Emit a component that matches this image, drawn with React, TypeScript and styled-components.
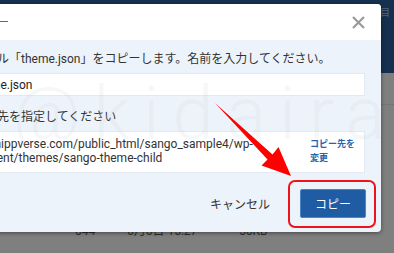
import React from 'react';
import styled, { createGlobalStyle } from 'styled-components';

const Global = createGlobalStyle`
  html, body { margin: 0; padding: 0; }
  body {
    width: 394px;
    height: 253px;
    overflow: hidden;
    background: #7f7f7f;
    font-family: Roboto, "Noto Sans CJK JP", sans-serif;
  }
`;

const Page = styled.div`
  position: relative;
  width: 394px;
  height: 253px;
  overflow: hidden;
  background: #7f7f7f;
`;

const TopBar = styled.div`
  height: 73px;
  background: #16304f;
  display: flex;
  justify-content: flex-end;
  padding: 8px 4px 0 0;
  box-sizing: border-box;
`;

const TopIcon = styled.span`
  font-size: 10px;
  color: #55657c;
  line-height: 10px;
`;

const Divider = styled.div`
  height: 31px;
  border-bottom: 1px solid rgba(0, 0, 0, 0.08);
`;

const ListRow = styled.div`
  display: flex;
  padding: 119px 0 0 75px;
  gap: 32px;
  font-size: 12px;
  line-height: 14px;
  color: #2e2e2e;
`;

const Cell = styled.span<{ $w: number }>`
  width: ${(p) => p.$w}px;
  white-space: nowrap;
`;

const Modal = styled.div`
  position: absolute;
  top: 4px;
  left: -60px;
  width: 441px;
  border-radius: 4px;
  overflow: hidden;
  box-shadow: 0 1px 4px rgba(0, 0, 0, 0.45);
  background: #edf3fa;
`;

const Header = styled.div`
  height: 36px;
  background: #ffffff;
  display: flex;
  align-items: center;
  justify-content: space-between;
  padding: 0 16px 0 21px;
`;

const TitleTab = styled.div`
  width: 47px;
  height: 1px;
  margin-top: -2px;
  background: #3a72b8;
`;

const CloseButton = styled.button`
  border: none;
  background: none;
  padding: 0;
  width: 14px;
  height: 14px;
  display: flex;
  align-items: center;
  justify-content: center;
  cursor: pointer;
`;

const Body = styled.div`
  padding: 11px 16px 0 21px;
`;

const Message = styled.div`
  font-size: 12px;
  line-height: 16px;
  color: #333333;
  white-space: nowrap;
`;

const NameInput = styled.div`
  margin-top: 6px;
  height: 23px;
  box-sizing: border-box;
  background: #ffffff;
  border: 1px solid #e3e9f0;
  padding-left: 11px;
  display: flex;
  align-items: center;
  font-size: 12px;
  color: #222222;
`;

const Label = styled.div`
  margin-top: 13px;
  font-size: 12px;
  line-height: 16px;
  color: #333333;
  white-space: nowrap;
`;

const PathBox = styled.div`
  margin-top: 6px;
  height: 42px;
  box-sizing: border-box;
  background: #ffffff;
  border: 1px solid #e3e9f0;
  padding: 4px 8px 6px 11px;
  display: flex;
  align-items: center;
  justify-content: space-between;
`;

const PathText = styled.div`
  font-size: 12px;
  line-height: 14px;
  color: #333333;
  white-space: nowrap;
`;

const ChangeLink = styled.a`
  font-size: 9px;
  line-height: 14px;
  font-weight: 700;
  color: #2463ae;
  text-decoration: none;
  width: 46px;
  white-space: nowrap;
`;

const Footer = styled.div`
  display: flex;
  justify-content: flex-end;
  align-items: center;
  padding: 16px 15px 14px 0;
  gap: 18px;
`;

const CancelButton = styled.button`
  border: none;
  background: none;
  font-family: inherit;
  font-size: 12px;
  color: #333333;
  padding: 0 12px;
  height: 29px;
  cursor: pointer;
`;

const CopyButton = styled.button`
  position: relative;
  width: 66px;
  height: 29px;
  border: 1px solid #4f84c4;
  border-radius: 2px;
  background: #1f5ca3;
  color: #ffffff;
  font-family: inherit;
  font-size: 12px;
  cursor: pointer;
  &::after {
    content: '';
    position: absolute;
    top: -10px;
    left: -13px;
    right: -11px;
    bottom: -11px;
    border: 2px solid #f0121b;
    border-radius: 7px;
    pointer-events: none;
  }
`;

const Watermark = styled.div`
  position: absolute;
  top: 66px;
  left: 73px;
  font-size: 74px;
  font-weight: 300;
  letter-spacing: 13px;
  color: rgba(200, 206, 214, 0.16);
  pointer-events: none;
  white-space: nowrap;
`;

const ArrowLayer = styled.svg`
  position: absolute;
  top: 0;
  left: 0;
  pointer-events: none;
`;

export default function App() {
  return (
    <>
      <Global />
      <Page>
        <TopBar>
          <TopIcon>目</TopIcon>
        </TopBar>
        <Divider />
        <ListRow>
          <Cell $w={20}>044</Cell>
          <Cell $w={80}>6月6日 15:27</Cell>
          <Cell $w={30}>56KB</Cell>
        </ListRow>
        <Modal>
          <Header>
            <TitleTab />
            <CloseButton aria-label="閉じる">
              <svg width="13" height="13" viewBox="0 0 13 13">
                <path d="M1 1 L12 12 M12 1 L1 12" stroke="#9a9a9a" strokeWidth="2.2" />
              </svg>
            </CloseButton>
          </Header>
          <Body>
            <Message>ファイル「theme.json」をコピーします。名前を入力してください。</Message>
            <NameInput>theme.json</NameInput>
            <Label>コピー先を指定してください</Label>
            <PathBox>
              <PathText>
                ra/shippverse.com/public_html/sango_sample4/wp-
                <br />
                content/themes/sango-theme-child
              </PathText>
              <ChangeLink href="#">
                コピー先を
                <br />
                変更
              </ChangeLink>
            </PathBox>
          </Body>
          <Footer>
            <CancelButton>キャンセル</CancelButton>
            <CopyButton>コピー</CopyButton>
          </Footer>
          <Watermark>@kidaira</Watermark>
        </Modal>
        <ArrowLayer width="394" height="253" viewBox="0 0 394 253">
          <polygon
            points="215,103 272.5,154.5 278.5,147 291,176 261.5,165.5 267.5,159.5"
            fill="#ff0000"
          />
        </ArrowLayer>
      </Page>
    </>
  );
}
